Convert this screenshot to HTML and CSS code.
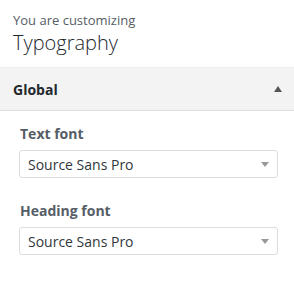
FILE: index.html
```html
<!DOCTYPE html>
<html lang="en">
<head>
  <meta charset="UTF-8">
  <meta name="viewport" content="width=device-width, initial-scale=1.0">
  <title>Typography</title>
  <link rel="stylesheet" href="styles.css">
</head>
<body>
  <div class="panel">
    <div class="panel-head">
      <span class="action">You are customizing</span>
      <h3 class="title">Typography</h3>
    </div>
    <div class="section">
      <div class="section-title">
        <span>Global</span>
        <span class="toggle"></span>
      </div>
      <div class="section-body">
        <div class="control">
          <label class="label">Text font</label>
          <div class="select">
            <span>Source Sans Pro</span>
            <span class="caret"></span>
          </div>
        </div>
        <div class="control">
          <label class="label">Heading font</label>
          <div class="select">
            <span>Source Sans Pro</span>
            <span class="caret"></span>
          </div>
        </div>
      </div>
    </div>
  </div>
</body>
</html>
```

FILE: styles.css
```css
body{
  margin: 0;
  background: #fff;
  font-family: "Open Sans", "Noto Sans", sans-serif;
}
.panel-head{
  padding: 10px 13px 11px;
  border-bottom: 1px solid #eee;
}
.action{
  display: block;
  font-size: 13px;
  line-height: 20px;
  color: #555d66;
}
.title{
  margin: 0;
  font-size: 20px;
  font-weight: 300;
  line-height: 26px;
  color: #23282d;
}
.section-title{
  display: flex;
  align-items: center;
  justify-content: space-between;
  height: 42px;
  padding: 0 12px 0 13px;
  background: #f3f3f3;
  border-bottom: 1px solid #ddd;
  font-size: 14px;
  font-weight: 700;
  color: #23282d;
}
.toggle{
  width: 0;
  height: 0;
  border-left: 4px solid transparent;
  border-right: 4px solid transparent;
  border-bottom: 6px solid #555;
}
.section-body{
  padding: 12px 16px 0 19px;
}
.control{
  margin-bottom: 22px;
}
.label{
  display: block;
  margin: 0 0 5px 1px;
  font-size: 14px;
  font-weight: 700;
  line-height: 22px;
  color: #555d66;
}
.select{
  display: flex;
  align-items: center;
  justify-content: space-between;
  height: 26px;
  padding: 0 8px;
  border: 1px solid #ddd;
  border-radius: 3px;
  font-size: 14px;
  color: #32373c;
}
.caret{
  width: 0;
  height: 0;
  border-left: 4px solid transparent;
  border-right: 4px solid transparent;
  border-top: 5px solid #999;
}
```
